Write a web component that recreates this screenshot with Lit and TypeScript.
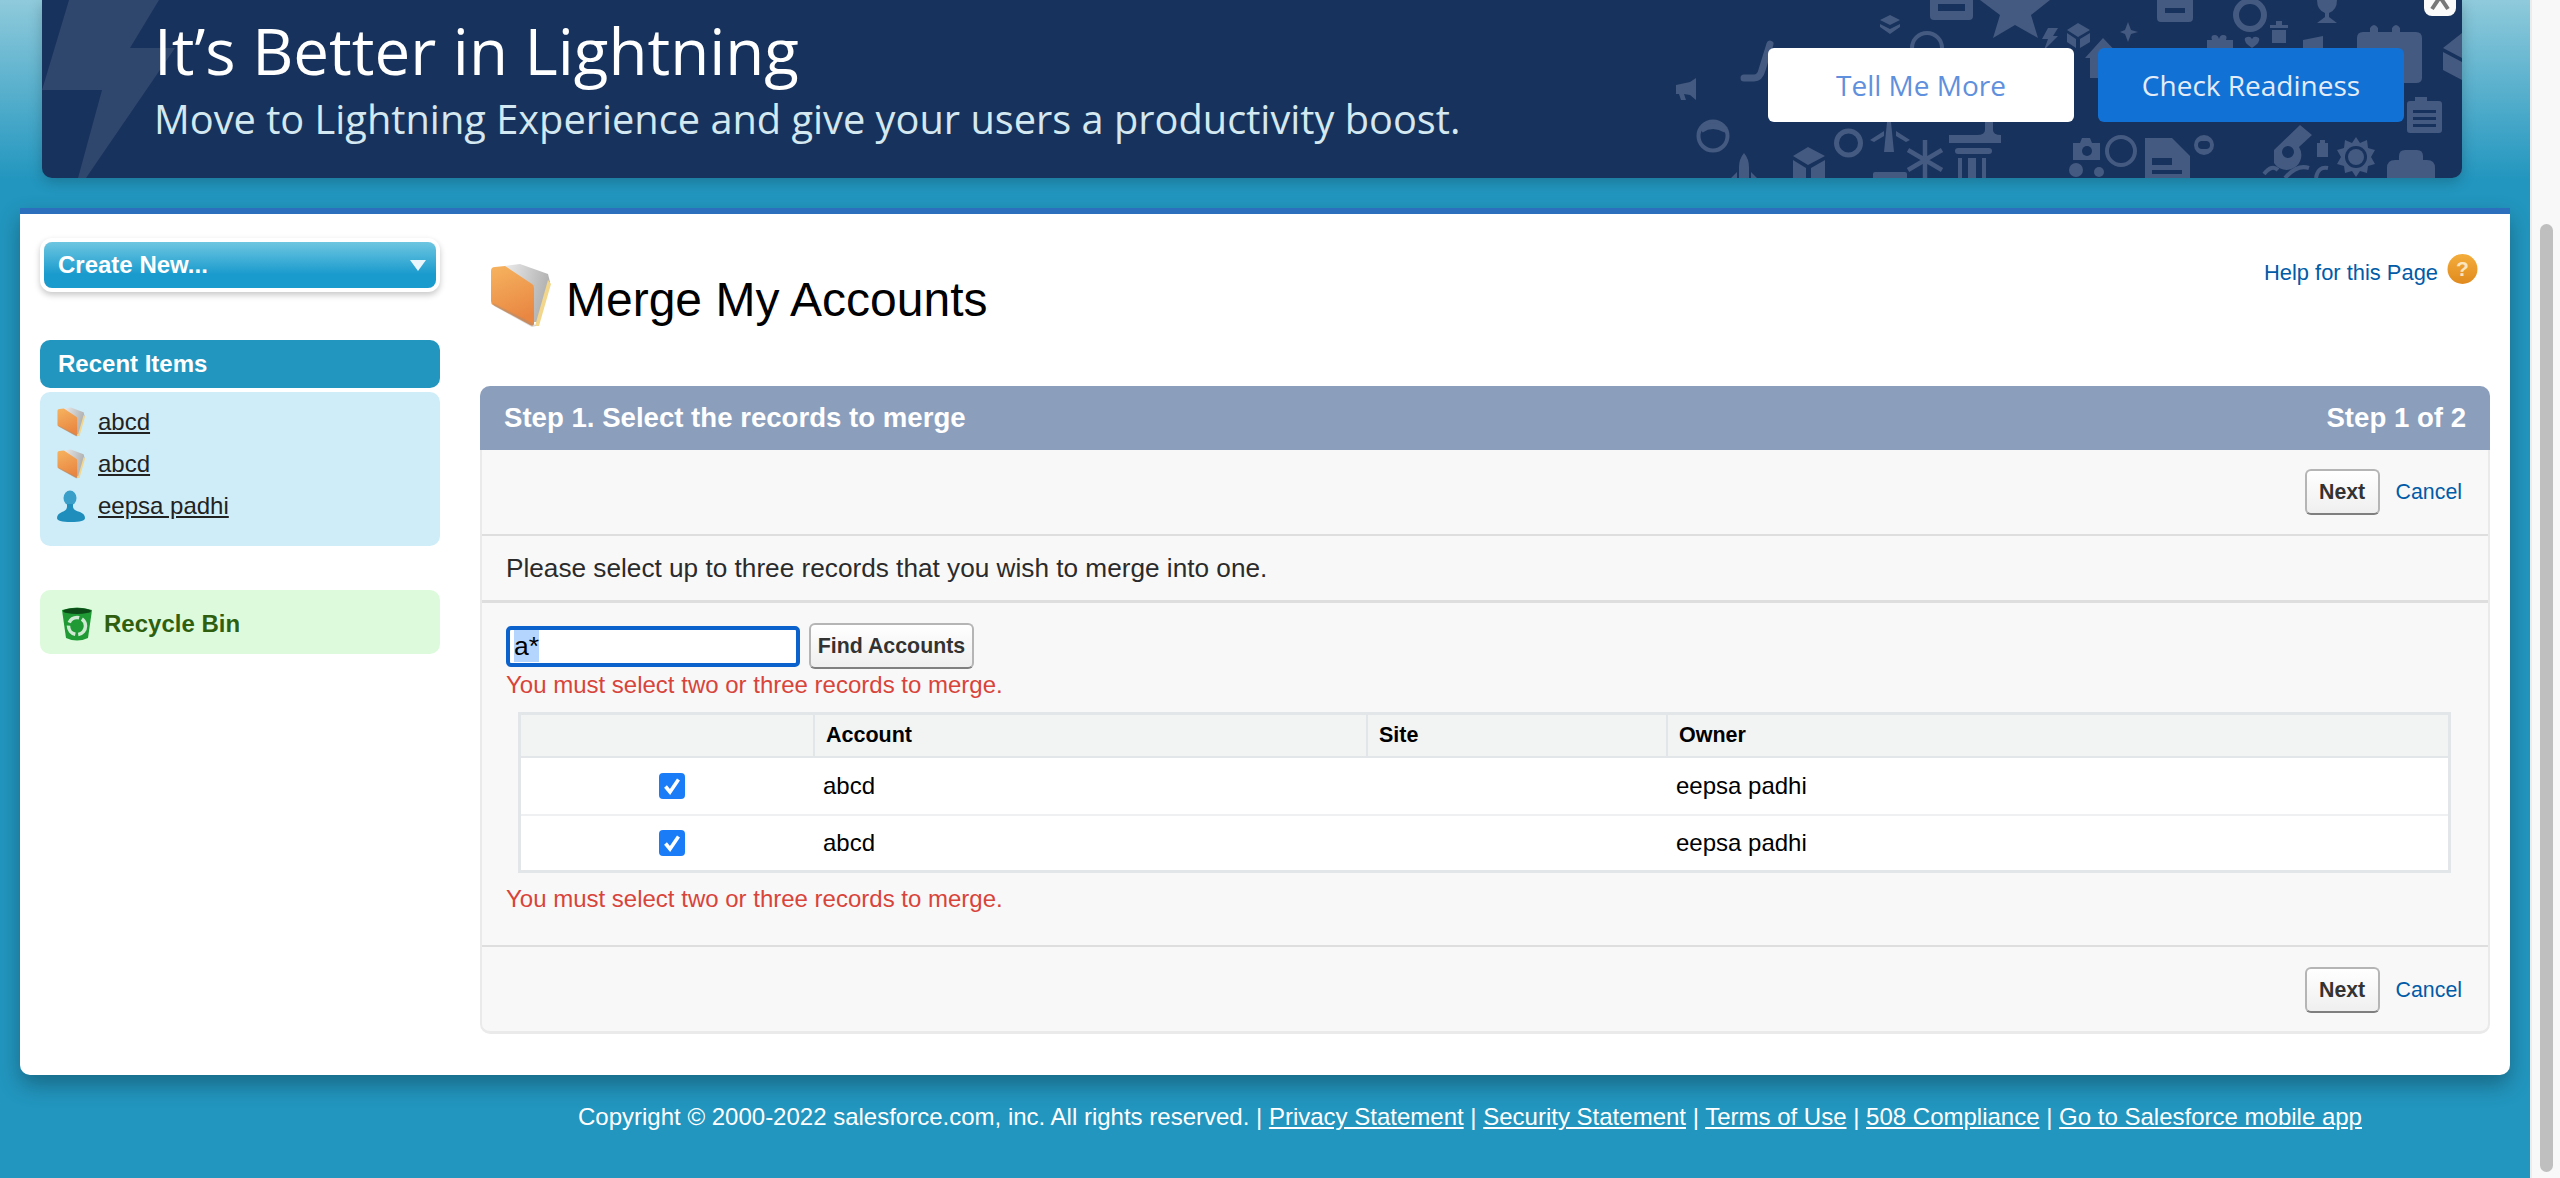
import { LitElement, css, html, svg } from "lit"
import { customElement } from "lit/decorators.js"

const folderIcon = (cls: string) => html`
  <svg class=${cls} viewBox="0 0 61 63">
    <defs>
      <linearGradient id="fold" x1="0" y1="0" x2="0.3" y2="1">
        <stop offset="0" stop-color="#f6b35f" />
        <stop offset="1" stop-color="#e98742" />
      </linearGradient>
      <linearGradient id="paper" x1="0" y1="0" x2="1" y2="0.3">
        <stop offset="0" stop-color="#ececec" />
        <stop offset="1" stop-color="#b0b0b0" />
      </linearGradient>
    </defs>
    <path d="M14 2 L30 0 L58 10 L60 18 L48 58 L42 58 Z" fill="url(#paper)" />
    <path d="M58 16 L61 20 L49 62 L45 62 Z" fill="#f2d68c" />
    <path d="M1 7 Q1 3 5 3 L15 2 L42 20 Q44 21 44 24 L44 60 Q43 63 40 61 L3 41 Q1 40 1 37 Z" fill="url(#fold)" />
    <path d="M4 42 L42 63 L46 62 L44 60 L3 39 Z" fill="#8f8f8f" opacity=".35" />
  </svg>
`

const personIcon = html`
  <svg class="small-icon" viewBox="0 0 28 32">
    <ellipse cx="13" cy="8" rx="6.5" ry="7.5" fill="#3aa0c9" />
    <path d="M10 14 h6 v3 q0 3 7 5 q5 2 5 6 q0 4 -14 4 q-14 0 -14 -4 q0 -4 5 -6 q5 -2 5 -5 Z" fill="#1f8ebc" />
  </svg>
`

const binIcon = html`
  <svg class="bin-icon" viewBox="0 0 32 34">
    <path d="M1 3 Q16 -2 31 3 L27 31 Q16 36 5 31 Z" fill="#1f9a34" />
    <ellipse cx="16" cy="4" rx="14" ry="3" fill="#0c4a18" />
    <circle cx="16" cy="19" r="8.5" fill="none" stroke="#cfe9d3" stroke-width="3.5" stroke-dasharray="12 3" />
  </svg>
`

const helpIcon = html`
  <svg class="help-icon" viewBox="0 0 31 30">
    <defs>
      <linearGradient id="help" x1="0" y1="0" x2="0" y2="1">
        <stop offset="0" stop-color="#f4ad3a" />
        <stop offset="1" stop-color="#e08a1e" />
      </linearGradient>
    </defs>
    <circle cx="15.5" cy="15" r="15" fill="url(#help)" />
    <text x="15.5" y="22" text-anchor="middle" font-family="Liberation Sans" font-weight="700" font-size="21" fill="#fbe5bd">?</text>
  </svg>
`

const check = html`
  <span class="check">
    <svg viewBox="0 0 26 26"><path d="M6.5 13.5 L11 19 L19.5 6.5" fill="none" stroke="#fff" stroke-width="3.6" /></svg>
  </span>
`

// page coordinates, the svg viewBox starts at the banner's left edge
const patternIcons = svg`
  <path d="M69 0 H159 L130 48 H175 L86 178 H78 L102 90 H42 Z" fill="#2f466d" />
  <g fill="#445a80" stroke="none">
    <rect x="1930" y="-6" width="43" height="26" rx="4" />
    <path d="M1980 0 H2050 L2031 15 L2038 38 L2015 25 L1993 38 L2000 15 Z" />
    <path d="M2048 28 H2058 L2053 36 H2058 L2044 50 L2048 39 H2042 Z" />
    <path d="M1890 15 L1900 20 L1890 25 L1880 20 Z M1880 24 L1890 29 L1900 24 V27 L1890 34 L1880 27 Z" />
    <path d="M1676 85 L1690 82 L1696 78 V100 L1690 95 L1684 94 L1686 100 H1681 L1679 94 H1676 Z" />
    <path d="M1834 143 a14.500 14.500 0 1 1 29 0 a14.500 14.500 0 1 1 -29 0 Z M1839 143 a9.500 9.500 0 1 0 19 0 a9.500 9.500 0 1 0 -19 0 Z" fill-rule="evenodd" />
    <path d="M1887 122 h4 l3 30 h-10 Z M1870 140 l14 -9 v5 l-10 6 Z M1910 140 l-14 -9 v5 l10 6 Z" />
    <path d="M1808 147 L1825 156 L1808 165 L1793 156 Z M1793 160 L1806 168 V178 H1793 Z M1825 160 L1811 168 V178 H1825 Z" />
    <path d="M1744 153 q5 6 5 14 v11 h-10 v-11 q0 -8 5 -14 Z M1731 178 l6 -6 v6 Z M1757 178 l-6 -6 v6 Z" />
    <path d="M1985 122 h8 v8 q0 5 8 5 v8 h-52 v-8 h28 q8 0 8 -5 Z" />
    <rect x="1955" y="148" width="37" height="6" rx="3" />
    <rect x="1958" y="158" width="4" height="20" />
    <rect x="1968" y="158" width="8" height="20" />
    <rect x="1982" y="158" width="4" height="20" />
    <rect x="1873" y="172" width="34" height="8" rx="2" />
    <path d="M2078 23 L2090 30 L2078 37 L2067 30 Z M2067 33 L2076 39 V48 L2067 42 Z M2090 33 L2080 39 V48 L2090 42 Z" />
    <path d="M2128 22 L2131 30 L2138 32 L2131 34 L2128 42 L2125 34 L2120 32 L2125 30 Z" />
    <path d="M2103 38 L2122 58 H2115 V78 H2090 V58 H2085 Z" />
    <path d="M2157 -6 h36 v24 a4 4 0 0 1 -4 4 h-28 a4 4 0 0 1 -4 -4 Z M2165 8 v5 h20 v-5 Z" fill-rule="evenodd" />
    <path d="M2233 15 a17 17 0 1 1 34 0 a17 17 0 1 1 -34 0 Z M2239 15 a11 11 0 1 0 22 0 a11 11 0 1 0 -22 0 Z" fill-rule="evenodd" />
    <path d="M2270 25 h6 v-4 h6 v4 h6 v3 h-18 Z M2272 30 h14 v13 h-14 Z" />
    <path d="M2207 48 v-8 h5 q-2 -5 3 -5 q3 0 4 4 q1 -4 4 -4 q5 0 3 5 h7 v8 Z M2245 38 q5 -3 7 1 q2 -4 7 -1 q2 4 -7 10 q-9 -6 -7 -10 Z" />
    <path d="M2303 40 L2323 36 L2323 48 H2303 Z" />
    <path d="M2317 0 h20 q0 10 -8 13 v4 l8 6 h-20 l8 -6 v-4 q-8 -3 -8 -13 Z" />
    <path d="M2357 38 q0 -6 6 -6 h7 v-4 q4 -6 8 0 v4 h14 v-4 q4 -6 8 0 v4 h16 q6 0 6 6 v40 q0 5 -6 5 h-53 q-6 0 -6 -5 Z" />
    <path d="M2443 48 L2462 33 V58 L2443 48 Z M2443 52 L2462 62 V80 L2443 70 Z" />
    <path d="M2407 104 q0 -3 3 -3 h5 v-4 h12 v4 h12 q3 0 3 3 v26 q0 3 -3 3 h-29 q-3 0 -3 -3 Z M2413 110 v3 h23 v-3 Z M2413 117 v3 h23 v-3 Z M2413 124 v3 h23 v-3 Z" fill-rule="evenodd" />
    <path d="M2274 150 L2300 125 L2312 135 L2299 147 A14 14 0 1 1 2274 163 Z M2282 152 a6 6 0 1 0 12 0 a6 6 0 1 0 -12 0 Z" fill-rule="evenodd" />
    <path d="M2317 143 h3 v-3 h5 v3 h3 v14 h-11 Z" />
    <path d="M2356 137 l4 6 7 -3 1 8 7 2 -4 7 4 7 -7 2 -1 7 -7 -2 -4 6 -4 -6 -7 2 -1 -7 -7 -2 4 -7 -4 -7 7 -2 1 -8 7 3 Z" />
    <path d="M2387 168 q0 -8 8 -8 h4 v-4 q0 -6 6 -6 h12 q6 0 6 6 v4 h4 q8 0 8 8 v10 h-48 Z" />
    <path d="M2073 143 h7 l2 -5 h8 l2 5 h8 v17 h-27 Z" />
    <path d="M2145 138 h27 l18 18 v22 h-45 Z" />
    <circle cx="2204" cy="145" r="10" />
    <circle cx="2076" cy="170" r="7" />
    <circle cx="2099" cy="172" r="5" />
  </g>
  <g fill="none" stroke="#445a80">
    <path d="M1744 78 H1754 Q1760 78 1762 70 L1770 44" stroke-width="7" stroke-linecap="round" />
    <circle cx="1713" cy="136" r="14.500" stroke-width="4" />
    <path d="M1701 130 Q1713 122 1726 130" stroke-width="6" />
    <path d="M1912 48 a15 15 0 0 1 30 0" stroke-width="4" />
    <path d="M1925 140 V178 M1908 150 L1942 170 M1942 150 L1908 170" stroke-width="4.500" />
    <circle cx="2121" cy="151" r="14" stroke-width="4" />
    <path d="M2264 174 q8 -10 14 -4 M2285 178 q12 -14 24 -10 M2316 178 q2 -12 12 -10" stroke-width="4" />
  </g>
  <g fill="#17325c">
    <rect x="1938" y="4" width="27" height="7" />
    <circle cx="2087" cy="151" r="5" />
    <rect x="2152" y="158" width="20" height="7" />
    <rect x="2152" y="170" width="30" height="4" />
    <rect x="2198" y="141" width="12" height="8" rx="4" />
    <circle cx="2356" cy="157" r="11" />
  </g>
  <circle cx="2356" cy="157" r="8" fill="#445a80" />
`

@customElement("app-root")
export class AppRoot extends LitElement {
  static styles = css`
    :host {
      display: flex;
      height: 1178px;
      overflow: hidden;
      font-family: "Liberation Sans", Arial, sans-serif;
      color: #222;
    }

    .page {
      flex: 1;
      min-width: 0;
      display: flex;
      flex-direction: column;
      background: linear-gradient(#8fcadb 0, #2296bf 180px);
    }

    .scrollbar {
      width: 30px;
      box-sizing: border-box;
      padding: 224px 7px 6px 8px;
      background: #f8f8f8;
      border-left: 2px solid #ececec;
    }

    .scrollbar div {
      height: 100%;
      border-radius: 8px;
      background: #bfbfbf;
    }

    .banner {
      position: relative;
      height: 178px;
      margin: 0 68px 0 42px;
      display: flex;
      align-items: flex-start;
      justify-content: space-between;
      background: #17325c;
      border-radius: 0 0 10px 10px;
      box-shadow: 0 4px 14px rgba(0, 0, 0, 0.22);
      overflow: hidden;
    }

    .pattern {
      position: absolute;
      left: 0;
      top: 0;
      width: 2420px;
      height: 178px;
    }

    .banner-text {
      position: relative;
      padding: 11px 0 0 112px;
      font-family: "Open Sans", sans-serif;
    }

    .banner-title {
      font-size: 63.700px;
      line-height: 80px;
      color: #fff;
      white-space: nowrap;
    }

    .banner-sub {
      margin-top: 3px;
      font-size: 39.750px;
      line-height: 50px;
      color: #d3e8f0;
      white-space: nowrap;
    }

    .banner-actions {
      position: relative;
      display: flex;
      gap: 24px;
      margin: 48px 58px 0 0;
    }

    .banner-btn {
      width: 306px;
      height: 74px;
      border: 0;
      border-radius: 6px;
      font: 400 28px "Open Sans", sans-serif;
    }

    .banner-btn.light {
      background: #fff;
      color: #5f90dd;
    }

    .banner-btn.dark {
      background: #1271d4;
      color: #e3ecf8;
    }

    .close {
      position: absolute;
      right: 6px;
      top: 0;
      width: 32px;
      height: 16px;
      background: #fafafa;
      border-radius: 0 0 8px 8px;
    }

    .close svg {
      display: block;
      width: 32px;
      height: 16px;
    }

    .main {
      margin: 30px 20px 0;
      height: 867px;
      box-sizing: border-box;
      display: flex;
      gap: 40px;
      padding: 24px 20px 0;
      background: #fff;
      border-top: 6px solid #2b6fbd;
      border-radius: 0 0 10px 10px;
      box-shadow: 0 10px 22px rgba(0, 0, 0, 0.3);
    }

    .sidebar {
      width: 400px;
      flex: none;
    }

    .create {
      height: 46px;
      margin: 4px;
      display: flex;
      align-items: center;
      justify-content: space-between;
      padding: 0 10px 0 14px;
      box-sizing: border-box;
      border-radius: 8px;
      color: #fff;
      font-size: 24px;
      font-weight: 700;
      background: linear-gradient(#6ec6e1, #1a9bcd 70%);
      box-shadow: 0 0 0 4px #fff, 0 3px 6px 4px rgba(0, 0, 0, 0.22);
    }

    .caret {
      width: 0;
      height: 0;
      border-left: 8px solid transparent;
      border-right: 8px solid transparent;
      border-top: 11px solid #e9f6fb;
    }

    .recent-head {
      height: 48px;
      margin-top: 52px;
      padding-left: 18px;
      display: flex;
      align-items: center;
      border-radius: 10px;
      background: #2296bf;
      color: #fff;
      font-size: 24px;
      font-weight: 700;
    }

    .recent-body {
      height: 154px;
      margin-top: 4px;
      padding-top: 9px;
      box-sizing: border-box;
      border-radius: 10px;
      background: #cfedf8;
    }

    .recent-row {
      height: 42px;
      display: flex;
      align-items: center;
      gap: 13px;
      padding-left: 17px;
      font-size: 24px;
    }

    .recent-row a {
      color: #222;
      text-decoration: underline;
    }

    .small-icon {
      width: 28px;
      height: 32px;
      flex: none;
    }

    .recycle {
      height: 64px;
      margin-top: 44px;
      padding: 4px 0 0 21px;
      box-sizing: border-box;
      display: flex;
      align-items: center;
      gap: 11px;
      border-radius: 10px;
      background: #ddfbdc;
      color: #2f5f0e;
      font-size: 24px;
      font-weight: 700;
    }

    .bin-icon {
      width: 32px;
      height: 34px;
      flex: none;
    }

    .content {
      flex: 1;
      min-width: 0;
    }

    .title-row {
      height: 148px;
      margin-top: -24px;
      display: flex;
      justify-content: space-between;
      align-items: flex-start;
      box-sizing: content-box;
      padding-bottom: 24px;
    }

    .title {
      display: flex;
      align-items: flex-start;
      gap: 15px;
      padding: 50px 0 0 10px;
      color: #000;
      font-size: 48px;
      line-height: 56px;
    }

    .title span {
      margin-top: 8px;
    }

    .title-icon {
      width: 61px;
      height: 63px;
      flex: none;
    }

    .help {
      display: flex;
      align-items: flex-start;
      gap: 9px;
      padding: 40px 12px 0 0;
      color: #015ba7;
      font-size: 21.900px;
    }

    .help span {
      margin-top: 4px;
      line-height: 30px;
    }

    .help-icon {
      width: 31px;
      height: 30px;
    }

    .step {
      display: flex;
      flex-direction: column;
      height: 648px;
      box-sizing: border-box;
      background: #f8f8f8;
      border: solid #eaeaea;
      border-width: 0 2px 3px;
      border-radius: 10px;
    }

    .step-head {
      height: 64px;
      margin: 0 -2px;
      padding: 0 24px;
      display: flex;
      align-items: center;
      justify-content: space-between;
      border-radius: 10px 10px 0 0;
      background: #8b9ebc;
      color: #fff;
      font-size: 27.600px;
      font-weight: 700;
    }

    .actions {
      height: 84px;
      display: flex;
      align-items: center;
      justify-content: flex-end;
      gap: 16px;
      padding-right: 26px;
      box-sizing: border-box;
      font-size: 21.330px;
      color: #015ba7;
    }

    .actions.top {
      height: 86px;
      border-bottom: 2px solid #dedede;
    }

    .actions.bottom {
      flex: 1;
      padding-top: 2px;
      border-top: 2px solid #dedede;
    }

    .btn {
      height: 46px;
      padding: 0 4px;
      border: 2px solid #b5b5b5;
      border-bottom-color: #7f7f7f;
      border-radius: 6px;
      background: linear-gradient(#fff, #efefef);
      color: #333;
      font: 700 21.330px "Liberation Sans", Arial, sans-serif;
    }

    .btn.next {
      width: 75px;
    }

    .btn.find {
      width: 165px;
    }

    .intro {
      height: 67px;
      display: flex;
      align-items: center;
      padding-left: 24px;
      box-sizing: border-box;
      border-bottom: 3px solid #dedede;
      font-size: 26.200px;
      color: #2b2b2b;
    }

    .body {
      padding: 20px 0 0 24px;
      height: 342px;
      box-sizing: border-box;
    }

    .search {
      display: flex;
      align-items: center;
      gap: 9px;
      height: 46px;
    }

    .input {
      width: 294px;
      height: 41px;
      box-sizing: border-box;
      padding: 0 4px;
      display: flex;
      align-items: center;
      border: 4px solid #0b62cc;
      border-radius: 5px;
      background: #fff;
      color: #000;
      font-size: 26.500px;
    }

    .input span {
      background: #b4d5fe;
      line-height: 32px;
    }

    .error {
      color: #d8443a;
      font-size: 24px;
      line-height: 28px;
      margin-top: 2px;
    }

    .error.below {
      margin-top: 12px;
    }

    .table {
      width: 1933px;
      margin: 13px 0 0 12px;
      box-sizing: border-box;
      border: 3px solid #e3e6e8;
      background: #fff;
      color: #000;
    }

    .tr {
      display: grid;
      grid-template-columns: 292px 553px 300px 1fr;
      align-items: center;
      height: 56px;
      box-sizing: border-box;
      font-size: 24px;
    }

    .tr.last {
      border-top: 2px solid #eef0f1;
    }

    .tr.head {
      height: 43px;
      align-items: stretch;
      border-bottom: 2px solid #e3e6e8;
      background: #f2f3f3;
      font-size: 21.500px;
      font-weight: 700;
    }

    .th {
      display: flex;
      align-items: center;
      padding-left: 11px;
      border-left: 2px solid #e3e6e8;
    }

    .th:first-child {
      border-left: 0;
    }

    .td {
      padding-left: 10px;
    }

    .td.box {
      display: flex;
      justify-content: center;
      padding-left: 9px;
    }

    .check {
      width: 26px;
      height: 26px;
      border-radius: 4px;
      background: #1a7cf7;
    }

    .check svg {
      display: block;
      width: 26px;
      height: 26px;
    }

    .footer {
      padding: 26px 0 0 578px;
      color: #fff;
      font-size: 24px;
      line-height: 32px;
      white-space: nowrap;
    }

    .footer a {
      color: #fff;
      text-decoration: underline;
    }
  `

  renderRow(last = false) {
    return html`
      <div class="tr ${last ? "last" : ""}">
        <div class="td box">${check}</div>
        <div class="td">abcd</div>
        <div class="td"></div>
        <div class="td">eepsa padhi</div>
      </div>
    `
  }

  render() {
    return html`
      <div class="page">
        <div class="banner">
          <svg class="pattern" viewBox="42 0 2420 178">${patternIcons}</svg>
          <div class="banner-text">
            <div class="banner-title">It’s Better in Lightning</div>
            <div class="banner-sub">Move to Lightning Experience and give your users a productivity boost.</div>
          </div>
          <div class="banner-actions">
            <button class="banner-btn light">Tell Me More</button>
            <button class="banner-btn dark">Check Readiness</button>
          </div>
          <div class="close">
            <svg viewBox="0 0 32 16"><path d="M8 9 L16 -3 L24 9" fill="none" stroke="#777" stroke-width="4" /></svg>
          </div>
        </div>

        <div class="main">
          <div class="sidebar">
            <div class="create">Create New...<span class="caret"></span></div>
            <div class="recent-head">Recent Items</div>
            <div class="recent-body">
              <div class="recent-row">${folderIcon("small-icon")}<a>abcd</a></div>
              <div class="recent-row">${folderIcon("small-icon")}<a>abcd</a></div>
              <div class="recent-row">${personIcon}<a>eepsa padhi</a></div>
            </div>
            <div class="recycle">${binIcon}Recycle Bin</div>
          </div>

          <div class="content">
            <div class="title-row">
              <div class="title">${folderIcon("title-icon")}<span>Merge My Accounts</span></div>
              <div class="help"><span>Help for this Page</span>${helpIcon}</div>
            </div>
            <div class="step">
              <div class="step-head"><span>Step 1. Select the records to merge</span><span>Step 1 of 2</span></div>
              <div class="actions top"><button class="btn next">Next</button>Cancel</div>
              <div class="intro">Please select up to three records that you wish to merge into one.</div>
              <div class="body">
                <div class="search">
                  <div class="input"><span>a*</span></div>
                  <button class="btn find">Find Accounts</button>
                </div>
                <div class="error">You must select two or three records to merge.</div>
                <div class="table">
                  <div class="tr head">
                    <div class="th"></div>
                    <div class="th">Account</div>
                    <div class="th">Site</div>
                    <div class="th">Owner</div>
                  </div>
                  ${this.renderRow()} ${this.renderRow(true)}
                </div>
                <div class="error below">You must select two or three records to merge.</div>
              </div>
              <div class="actions bottom"><button class="btn next">Next</button>Cancel</div>
            </div>
          </div>
        </div>

        <div class="footer">
          Copyright © 2000-2022 salesforce.com, inc. All rights reserved. |
          <a>Privacy Statement</a> | <a>Security Statement</a> | <a>Terms of Use</a> | <a>508 Compliance</a> |
          <a>Go to Salesforce mobile app</a>
        </div>
      </div>
      <div class="scrollbar"><div></div></div>
    `
  }
}
